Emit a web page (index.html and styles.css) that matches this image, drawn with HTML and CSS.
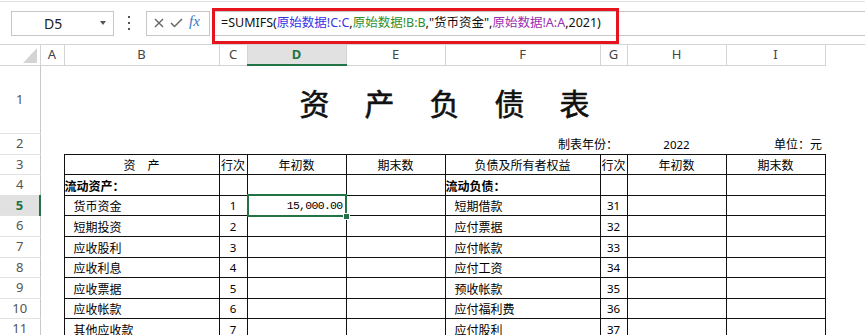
FILE: index.html
```html
<!DOCTYPE html>
<html lang="zh-CN">
<head>
  <meta charset="UTF-8">
  <meta name="viewport" content="width=device-width, initial-scale=1.0">
  <title>资产负债表</title>
  <link rel="stylesheet" href="styles.css">
</head>
<body>
  <div class="formula-bar">
    <div class="name-box">
      <span class="name-box-text">D5</span>
      <span class="name-box-arrow"></span>
    </div>
    <div class="bar-dots"><i></i><i></i><i></i></div>
    <div class="bar-buttons">
      <svg class="bar-icon" width="10" height="10" viewBox="0 0 10 10"><path d="M1 1L9 9M9 1L1 9" stroke="#666" stroke-width="1.4" fill="none"/></svg>
      <svg class="bar-icon" width="13" height="10" viewBox="0 0 13 10"><path d="M1 5L4.5 8.5L12 1" stroke="#666" stroke-width="1.5" fill="none"/></svg>
      <span class="bar-fx">fx</span>
    </div>
    <div class="bar-input">
      <span>=SUMIFS(</span><span class="ref-blue">原始数据!C:C</span><span>,</span><span class="ref-green">原始数据!B:B</span><span>,"货币资金",</span><span class="ref-purple">原始数据!A:A</span><span>,2021)</span>
    </div>
    <div class="mark"></div>
  </div>

  <table class="sheet">
    <colgroup>
      <col class="w-head">
      <col class="w-a">
      <col class="w-name">
      <col class="w-no">
      <col class="w-num">
      <col class="w-num">
      <col class="w-name">
      <col class="w-no-g">
      <col class="w-num">
      <col class="w-num">
      <col>
    </colgroup>
    <tr class="col-heads">
      <th class="corner"><span class="corner-mark"></span></th>
      <th>A</th><th>B</th><th>C</th><th class="on">D</th><th>E</th><th>F</th><th>G</th><th>H</th><th>I</th>
      <th class="none"></th>
    </tr>
    <tr class="r-title">
      <th class="row-head">1</th>
      <td></td>
      <td colspan="8" class="title">
        <div class="title-text"><span>资</span><span>产</span><span>负</span><span>债</span><span>表</span></div>
      </td>
      <td></td>
    </tr>
    <tr class="r-21">
      <th class="row-head">2</th>
      <td></td>
      <td colspan="3"></td>
      <td></td>
      <td colspan="2" class="right pad-r">制表年份：</td>
      <td class="center no">2022</td>
      <td class="right pad-r2">单位：元</td>
      <td></td>
    </tr>
    <tr class="r-20">
      <th class="row-head">3</th>
      <td></td>
      <td class="c center">资　产</td>
      <td class="c center">行次</td>
      <td class="c center">年初数</td>
      <td class="c center">期末数</td>
      <td class="c center">负债及所有者权益</td>
      <td class="c center">行次</td>
      <td class="c center">年初数</td>
      <td class="c center">期末数</td>
      <td></td>
    </tr>
    <tr class="r-21">
      <th class="row-head">4</th>
      <td></td>
      <td class="c bold">流动资产：</td>
      <td class="c"></td><td class="c"></td><td class="c"></td>
      <td class="c bold">流动负债：</td>
      <td class="c"></td><td class="c"></td><td class="c"></td>
      <td></td>
    </tr>
    <tr class="r-20">
      <th class="row-head on">5</th>
      <td></td>
      <td class="c item">货币资金</td>
      <td class="c center no">1</td>
      <td class="c right amount sel">15,000.00</td>
      <td class="c"></td>
      <td class="c item">短期借款</td>
      <td class="c center no">31</td>
      <td class="c"></td><td class="c"></td>
      <td></td>
    </tr>
    <tr class="r-21">
      <th class="row-head">6</th>
      <td></td>
      <td class="c item">短期投资</td>
      <td class="c center no">2</td>
      <td class="c"></td><td class="c"></td>
      <td class="c item">应付票据</td>
      <td class="c center no">32</td>
      <td class="c"></td><td class="c"></td>
      <td></td>
    </tr>
    <tr class="r-21">
      <th class="row-head">7</th>
      <td></td>
      <td class="c item">应收股利</td>
      <td class="c center no">3</td>
      <td class="c"></td><td class="c"></td>
      <td class="c item">应付帐款</td>
      <td class="c center no">33</td>
      <td class="c"></td><td class="c"></td>
      <td></td>
    </tr>
    <tr class="r-20">
      <th class="row-head">8</th>
      <td></td>
      <td class="c item">应收利息</td>
      <td class="c center no">4</td>
      <td class="c"></td><td class="c"></td>
      <td class="c item">应付工资</td>
      <td class="c center no">34</td>
      <td class="c"></td><td class="c"></td>
      <td></td>
    </tr>
    <tr class="r-21">
      <th class="row-head">9</th>
      <td></td>
      <td class="c item">应收票据</td>
      <td class="c center no">5</td>
      <td class="c"></td><td class="c"></td>
      <td class="c item">预收帐款</td>
      <td class="c center no">35</td>
      <td class="c"></td><td class="c"></td>
      <td></td>
    </tr>
    <tr class="r-20">
      <th class="row-head">10</th>
      <td></td>
      <td class="c item">应收帐款</td>
      <td class="c center no">6</td>
      <td class="c"></td><td class="c"></td>
      <td class="c item">应付福利费</td>
      <td class="c center no">36</td>
      <td class="c"></td><td class="c"></td>
      <td></td>
    </tr>
    <tr class="r-21">
      <th class="row-head">11</th>
      <td></td>
      <td class="c item">其他应收款</td>
      <td class="c center no">7</td>
      <td class="c"></td><td class="c"></td>
      <td class="c item">应付股利</td>
      <td class="c center no">37</td>
      <td class="c"></td><td class="c"></td>
      <td></td>
    </tr>
  </table>
</body>
</html>
```

FILE: styles.css
```css
html, body {
  margin: 0;
  padding: 0;
  background-color: #fff;
  color: #000;
}
body {
  font-family: "Noto Sans", "Noto Sans CJK SC", sans-serif;
  overflow: hidden;
}
*, *:before, *:after { box-sizing: border-box; }

/* formula bar */
.formula-bar {
  position: relative;
  display: flex;
  align-items: center;
  height: 44px;
  margin-top: 1px;
  border-top: 1px solid #e2e2e2;
  border-bottom: 1px solid #d4d4d4;
}
.name-box {
  display: flex;
  align-items: center;
  width: 103px;
  height: 25px;
  margin-left: 11px;
  border: 1px solid #c6c6c6;
}
.name-box-text {
  flex: 1;
  padding-left: 32px;
  font-size: 14px;
  color: #222;
}
.name-box-arrow {
  width: 0;
  height: 0;
  margin-right: 7px;
  border-left: 3px solid transparent;
  border-right: 3px solid transparent;
  border-top: 4px solid #555;
}
.bar-dots {
  display: flex;
  flex-direction: column;
  gap: 4px;
  margin-left: 14px;
  margin-right: 16px;
}
.bar-dots i {
  display: block;
  width: 2px;
  height: 2px;
  background-color: #555;
}
.bar-buttons {
  display: flex;
  align-items: center;
  gap: 6px;
  width: 64px;
  height: 25px;
  padding-left: 7px;
  border: 1px solid #c6c6c6;
}
.bar-fx {
  font-family: "Liberation Serif", serif;
  font-style: italic;
  font-size: 15px;
  color: #3c78c8;
  margin-top: -3px;
}
.bar-input {
  flex: 1;
  height: 25px;
  margin-left: 2px;
  padding-left: 8px;
  border-top: 1px solid #c6c6c6;
  border-bottom: 1px solid #c6c6c6;
  border-left: 1px solid #c6c6c6;
  font-size: 12.5px;
  line-height: 22px;
  white-space: nowrap;
  color: #111;
}
.ref-blue { color: #3434e6; }
.ref-green { color: #2e8f2e; }
.ref-purple { color: #9a2db0; }

/* red annotation box over the formula */
.mark {
  position: absolute;
  left: 212px;
  top: 6px;
  width: 407px;
  height: 36px;
  border: 3px solid #e5141e;
}

/* sheet grid */
.sheet {
  border-collapse: collapse;
  table-layout: fixed;
  width: 865px;
}
.w-head { width: 40px; }
.w-a { width: 24px; }
.w-name { width: 155px; }
.w-no { width: 28px; }
.w-no-g { width: 27px; }
.w-num { width: 99px; }

.sheet th, .sheet td {
  padding: 0;
  white-space: nowrap;
  overflow: hidden;
  line-height: 1;
}
.sheet td {
  font-family: "Noto Sans CJK SC", sans-serif;
  font-size: 12px;
  padding-top: 2px;
}

.col-heads { height: 20px; }
.col-heads th {
  font-weight: normal;
  font-size: 13px;
  color: #444;
  border-right: 1px solid #d4d4d4;
  border-bottom: 1px solid #d4d4d4;
}
.col-heads th.none { border: none; }
.col-heads th.on {
  background-color: #e1e1e1;
  color: #217346;
  font-weight: bold;
  border-bottom: 2px solid #217346;
}
.corner { position: relative; }
.corner-mark {
  position: absolute;
  right: 3px;
  bottom: 2px;
  width: 0;
  height: 0;
  border-left: 14px solid transparent;
  border-bottom: 15px solid #d4d4d4;
}

.row-head {
  font-size: 13px;
  color: #555;
  border-right: 1px solid #c8c8c8;
  border-bottom: 1px solid #e3e3e3;
}
.sheet th.row-head { font-weight: normal; }
.sheet th.row-head.on {
  background-color: #e1e1e1;
  color: #217346;
  font-weight: bold;
  border-right: 2px solid #217346;
}

.r-title { height: 68px; }
.r-20 { height: 20px; }
.r-21 { height: 21px; }

.title-text {
  display: flex;
  justify-content: center;
  gap: 35px;
  font-size: 30px;
  font-weight: 400;
  -webkit-text-stroke: 0.6px #111;
  padding-top: 2px;
  color: #111;
}

.c { border: 1px solid #111; }
.center { text-align: center; }
.right { text-align: right; }
.bold { font-weight: bold; }
.sheet td.item { padding-left: 9px; }
.sheet td.pad-r { padding-right: 9px; }
.sheet td.pad-r2 { padding-right: 3px; }
.sheet td.no {
  font-family: "Noto Sans", sans-serif;
  font-size: 11.5px;
}
.sheet td.amount {
  font-family: "Liberation Mono", monospace;
  font-size: 11.5px;
  letter-spacing: -0.7px;
  padding-right: 3px;
}

/* active cell */
.sheet td.sel { position: relative; overflow: visible; }
.sel:after {
  content: "";
  position: absolute;
  left: -1px;
  top: -2px;
  right: -1px;
  bottom: -2px;
  border: 2px solid #217346;
}
.sel:before {
  content: "";
  position: absolute;
  right: -3px;
  bottom: -4px;
  width: 5px;
  height: 5px;
  background-color: #217346;
  outline: 1px solid #fff;
  z-index: 1;
}
```
